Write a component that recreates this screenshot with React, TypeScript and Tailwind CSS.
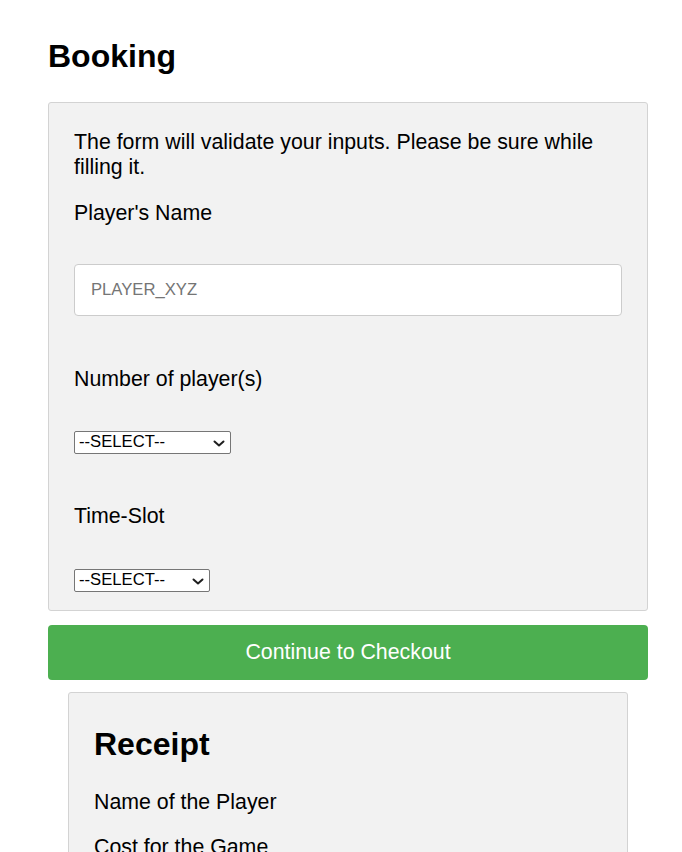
import React from 'react';

const Chevron = () => (
    <svg
        className="pointer-events-none absolute right-[6px] top-[9px]"
        width="12"
        height="7"
        viewBox="0 0 12 7"
        fill="none"
        stroke="#1f1f1f"
        strokeWidth="2"
        strokeLinecap="round"
        strokeLinejoin="round"
    >
        <polyline points="1.5,1.5 6,5.5 10.5,1.5" />
    </svg>
);

const SelectBox = ({ width, options }: { width: string; options: string[] }) => (
    <div className={`relative h-[23px] ${width}`}>
        <select className="block h-full w-full appearance-none rounded-[2px] border border-[#767676] bg-white pl-[4px] text-[16.67px] leading-none text-black outline-none">
            <option>--SELECT--</option>
            {options.map((o) => (
                <option key={o}>{o}</option>
            ))}
        </select>
        <Chevron />
    </div>
);

const App = () => {
    return (
        <div className="h-[852px] overflow-hidden bg-white font-['Liberation_Sans',Arial,sans-serif] text-[21.33px] leading-[25px] text-black">
            <div className="ml-[48px] w-[600px] pt-[38px]">
                <h2 className="text-[32px] font-bold leading-[37px]">Booking</h2>

                <form className="mt-[27px] rounded-[3px] border border-[#d3d3d3] bg-[#f2f2f2] px-[25px] pt-[27px] pb-[18px]">
                    <p>The form will validate your inputs. Please be sure while filling it.</p>

                    <label className="mt-[21px] block">Player's Name</label>
                    <input
                        type="text"
                        placeholder="PLAYER_XYZ"
                        className="mt-[38px] block h-[52px] w-full rounded-[4px] border border-[#cccccc] bg-white px-[16px] text-[16.67px] outline-none placeholder:text-[#757575]"
                    />

                    <label className="mt-[51px] block">Number of player(s)</label>
                    <div className="mt-[39px]">
                        <SelectBox width="w-[157px]" options={['1', '2', '3', '4', '5 or more players']} />
                    </div>

                    <label className="mt-[50px] block">Time-Slot</label>
                    <div className="mt-[40px]">
                        <SelectBox width="w-[136px]" options={['10:00 - 11:00', '11:00 - 12:00', '14:00 - 15:00']} />
                    </div>
                </form>

                <button
                    type="button"
                    className="mt-[14px] h-[55px] w-full rounded-[4px] bg-[#4caf50] text-center text-white"
                >
                    Continue to Checkout
                </button>

                <div className="mx-[20px] mt-[12px] rounded-[3px] border border-[#d3d3d3] bg-[#f2f2f2] px-[25px] pt-[33px] pb-[20px]">
                    <h1 className="text-[32px] font-bold leading-[37px]">Receipt</h1>
                    <p className="mt-[27px]">Name of the Player</p>
                    <p className="mt-[20px]">Cost for the Game</p>
                    <p className="mt-[20px]">Time-Slot</p>
                    <p className="mt-[20px]">Total</p>
                </div>
            </div>
        </div>
    );
};

export default App;
